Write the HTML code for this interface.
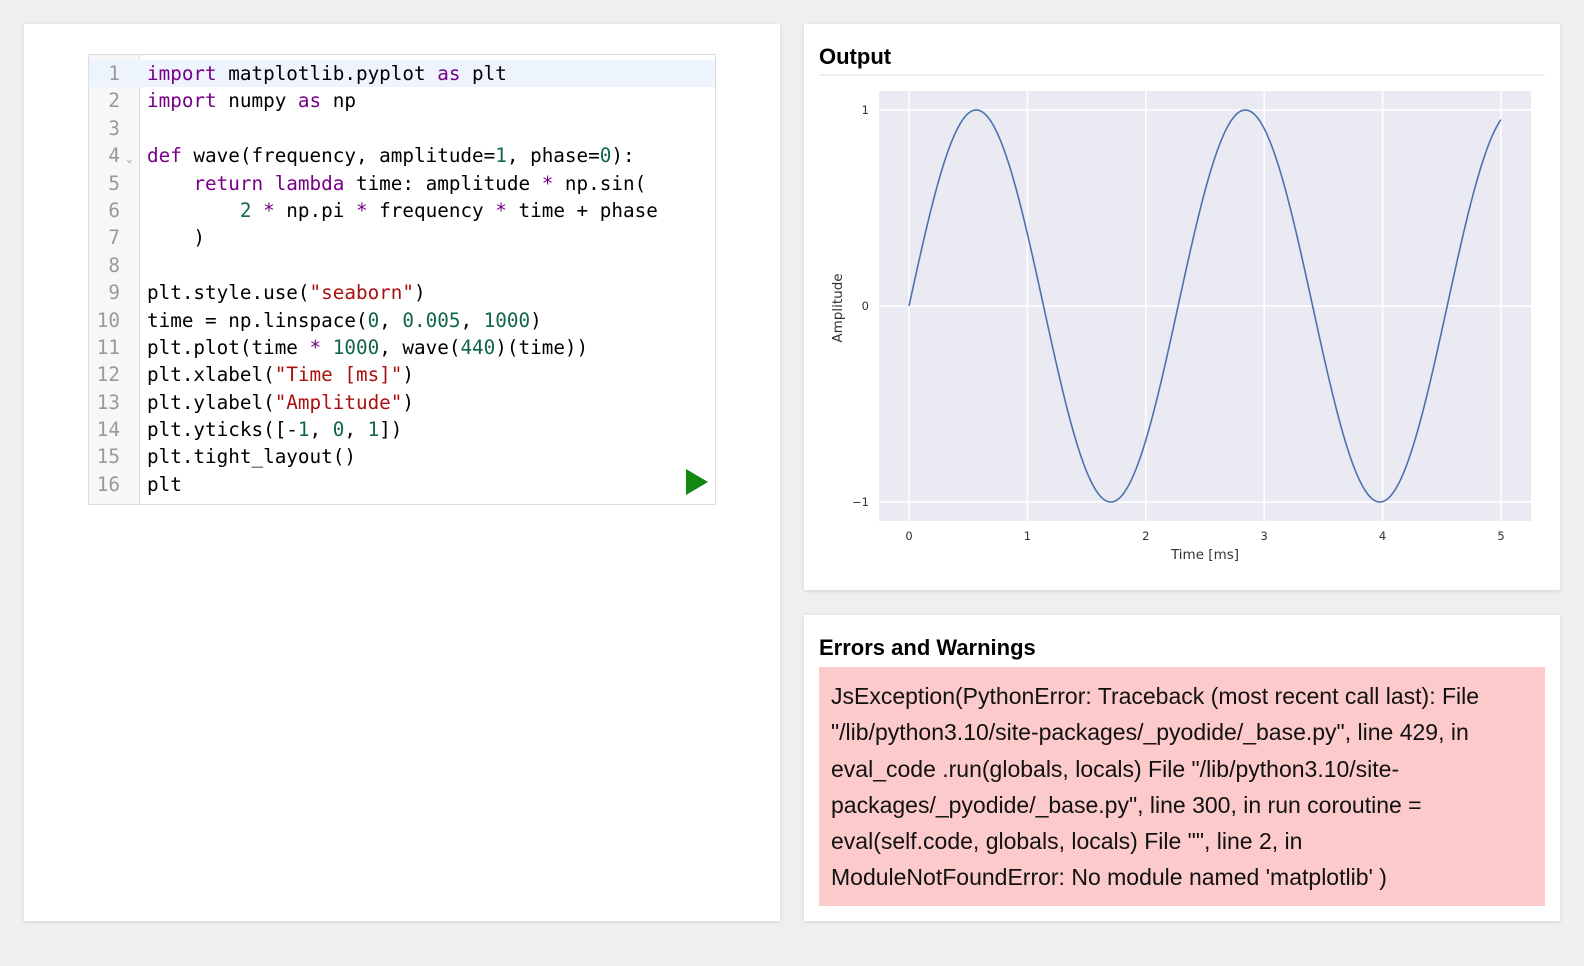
<!DOCTYPE html>
<html><head><meta charset="utf-8"><style>
*{margin:0;padding:0;box-sizing:border-box}
body{width:1584px;height:966px;background:#efefef;position:relative;overflow:hidden;font-family:"Liberation Sans",sans-serif}
.panel{position:absolute;background:#fff;box-shadow:0 1px 4px rgba(0,0,0,.12)}
.editor{position:absolute;left:88px;top:54px;width:628px;height:451px;border:1px solid #ddd;background:#fff;overflow:hidden}
.gutter{position:absolute;left:0;top:0;width:51px;height:100%;background:#f7f7f7;border-right:1px solid #ddd}
.code{position:absolute;left:0;top:5px;width:100%;font-family:"DejaVu Sans Mono","Liberation Mono",monospace;font-size:19.3px}
.ln{height:27.4px;line-height:27.4px;white-space:pre;position:relative}
.ln .n{position:absolute;left:0;width:31px;text-align:right;color:#999}
.ln .t{position:absolute;left:58px;color:#000}
.ln.act{background:#eef4fd}
.k{color:#708}.m{color:#164}.s{color:#a11}.o{color:#708}
h2{position:absolute;font-size:22px;font-weight:bold;color:#000}
.err{position:absolute;left:819px;top:667px;width:726px;height:239px;background:#fccaca;padding:11px 0 0 12px;font-size:23px;line-height:36.3px;color:#111;white-space:nowrap}
</style></head><body>
<div class="panel" style="left:24px;top:24px;width:756px;height:897px"></div>
<div class="panel" style="left:804px;top:24px;width:756px;height:566px"></div>
<div class="panel" style="left:804px;top:615px;width:756px;height:306px"></div>

<div class="editor">
<div class="gutter"></div>
<div class="code">
<div class="ln act"><span class="n">1</span><span class="t"><span class="k">import</span> matplotlib.pyplot <span class="k">as</span> plt</span></div>
<div class="ln"><span class="n">2</span><span class="t"><span class="k">import</span> numpy <span class="k">as</span> np</span></div>
<div class="ln"><span class="n">3</span><span class="t"></span></div>
<div class="ln"><span class="n">4</span><span style="position:absolute;left:37px;top:3px;font-size:11px;color:#999">⌄</span><span class="t"><span class="k">def</span> wave(frequency, amplitude=<span class="m">1</span>, phase=<span class="m">0</span>):</span></div>
<div class="ln"><span class="n">5</span><span class="t">    <span class="k">return</span> <span class="k">lambda</span> time: amplitude <span class="o">*</span> np.sin(</span></div>
<div class="ln"><span class="n">6</span><span class="t">        <span class="m">2</span> <span class="o">*</span> np.pi <span class="o">*</span> frequency <span class="o">*</span> time + phase</span></div>
<div class="ln"><span class="n">7</span><span class="t">    )</span></div>
<div class="ln"><span class="n">8</span><span class="t"></span></div>
<div class="ln"><span class="n">9</span><span class="t">plt.style.use(<span class="s">"seaborn"</span>)</span></div>
<div class="ln"><span class="n">10</span><span class="t">time = np.linspace(<span class="m">0</span>, <span class="m">0.005</span>, <span class="m">1000</span>)</span></div>
<div class="ln"><span class="n">11</span><span class="t">plt.plot(time <span class="o">*</span> <span class="m">1000</span>, wave(<span class="m">440</span>)(time))</span></div>
<div class="ln"><span class="n">12</span><span class="t">plt.xlabel(<span class="s">"Time [ms]"</span>)</span></div>
<div class="ln"><span class="n">13</span><span class="t">plt.ylabel(<span class="s">"Amplitude"</span>)</span></div>
<div class="ln"><span class="n">14</span><span class="t">plt.yticks([-<span class="m">1</span>, <span class="m">0</span>, <span class="m">1</span>])</span></div>
<div class="ln"><span class="n">15</span><span class="t">plt.tight_layout()</span></div>
<div class="ln"><span class="n">16</span><span class="t">plt</span></div>
</div>
<svg style="position:absolute;left:595px;top:413px" width="26" height="28"><path d="M2 1 L24 14 L2 27 Z" fill="#118811"/></svg>
</div>

<h2 style="left:819px;top:44px">Output</h2>
<div style="position:absolute;left:819px;top:74px;width:726px;height:2px;background:#eee"></div>

<svg style="position:absolute;left:0;top:0" width="1584" height="966">
<rect x="879" y="91" width="652" height="430" fill="#eaeaf2"/>
<g stroke="#fff" stroke-width="1.5">
<line x1="909" y1="91" x2="909" y2="521"/><line x1="1027.4" y1="91" x2="1027.4" y2="521"/><line x1="1145.8" y1="91" x2="1145.8" y2="521"/><line x1="1264.2" y1="91" x2="1264.2" y2="521"/><line x1="1382.6" y1="91" x2="1382.6" y2="521"/><line x1="1501" y1="91" x2="1501" y2="521"/>
<line x1="879" y1="110" x2="1531" y2="110"/><line x1="879" y1="306" x2="1531" y2="306"/><line x1="879" y1="502" x2="1531" y2="502"/>
</g>
<path id="w" fill="none" stroke="#4c72b0" stroke-width="1.6" d=""/>
<g font-family="DejaVu Sans,sans-serif" font-size="11.5" fill="#333" text-anchor="middle">
<text x="909" y="540">0</text><text x="1027.4" y="540">1</text><text x="1145.8" y="540">2</text><text x="1264.2" y="540">3</text><text x="1382.6" y="540">4</text><text x="1501" y="540">5</text>
<text x="869" y="114" text-anchor="end">1</text><text x="869" y="310" text-anchor="end">0</text><text x="869" y="506" text-anchor="end">−1</text>
<text x="1205" y="559" font-size="13.5">Time [ms]</text>
<text transform="translate(842,308) rotate(-90)" font-size="13.5">Amplitude</text>
</g>
</svg>
<script>
var d="";for(var i=0;i<=600;i++){var t=5*i/600;var x=909+118.4*t,y=306-196*Math.sin(2*Math.PI*0.44*t);d+=(i?"L":"M")+x.toFixed(2)+" "+y.toFixed(2);}
document.getElementById("w").setAttribute("d",d);
</script>

<h2 style="left:819px;top:635px">Errors and Warnings</h2>
<div class="err">JsException(PythonError: Traceback (most recent call last): File<br>"/lib/python3.10/site-packages/_pyodide/_base.py", line 429, in<br>eval_code .run(globals, locals) File "/lib/python3.10/site-<br>packages/_pyodide/_base.py", line 300, in run coroutine =<br>eval(self.code, globals, locals) File "", line 2, in<br>ModuleNotFoundError: No module named 'matplotlib' )</div>
</body></html>
